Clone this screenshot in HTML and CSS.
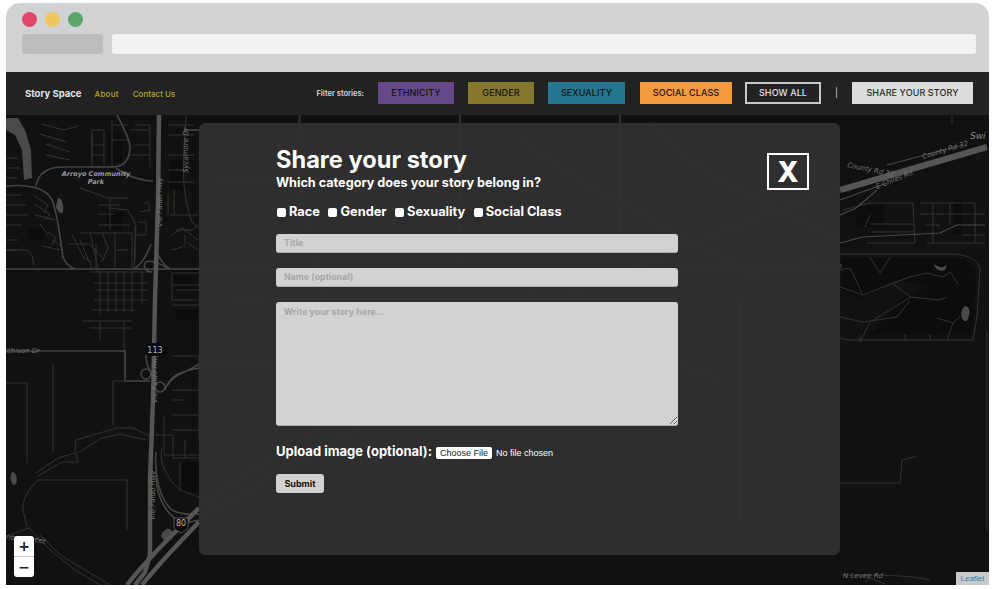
FILE: index.html
```html
<!DOCTYPE html>
<html lang="en">
<head>
<meta charset="utf-8">
<title>Story Space</title>
<link rel="stylesheet" href="styles.css">
</head>
<body>
<div class="window">
  <div class="chrome">
    <div class="lights"><span class="light red"></span><span class="light yellow"></span><span class="light green"></span></div>
    <div class="toolbar"><span class="tabbox"></span><span class="urlbar"></span></div>
  </div>
  <nav class="nav">
    <div class="nav-left">
      <a class="brand">Story Space</a>
      <a class="link link-about">About</a>
      <a class="link">Contact Us</a>
    </div>
    <div class="nav-right">
      <span class="filter-label">Filter stories:</span>
      <a class="btn ethnicity">ETHNICITY</a>
      <a class="btn gender">GENDER</a>
      <a class="btn sexuality">SEXUALITY</a>
      <a class="btn social">SOCIAL CLASS</a>
      <a class="btn showall">SHOW ALL</a>
      <span class="divider">|</span>
      <a class="btn share">SHARE YOUR STORY</a>
    </div>
  </nav>
  <main class="map">
    <svg class="map-art" viewBox="6 115 983 470" aria-hidden="true">
      <g class="dark">
        <rect x="106" y="212" width="16" height="18"/><rect x="170" y="160" width="14" height="30"/>
        <rect x="176" y="310" width="22" height="10"/><rect x="172" y="270" width="26" height="20"/>
        <rect x="28" y="228" width="16" height="12"/><rect x="108" y="133" width="14" height="30"/>
        <rect x="180" y="462" width="19" height="30"/><rect x="856" y="205" width="28" height="22"/>
        <rect x="953" y="200" width="8" height="34"/>
        <path d="M842 258H950C975 258 978 270 975 300L970 335H870L900 300L930 285L900 280L860 298L842 290Z"/>
      </g>
      <g class="water">
        <path d="M6 118H18L25 130L31 150L32 178L24 180L22 150L15 135L6 130Z"/>
        <path d="M58 198C62 198 64 205 63 212C61 215 57 212 56 206Z"/>
        <path d="M12 472C16 472 18 478 16 484L13 485C10 480 10 476 12 472Z"/>
        <path d="M165 530C170 526 174 532 172 535L165 540C160 538 160 534 165 530Z"/>
        <path d="M965 306C970 306 971 313 967 321L964 321C960 317 960 310 965 306Z"/>
        <path d="M934 264C939 268 943 268 947 265L945 270C940 272 935 270 934 264Z"/>
      </g>
      <g class="street">
        <path d="M42 124L64 130L78 126M40 134L66 142M46 144L70 152M46 155L70 160M6 158H18M6 168H20M6 178H18M6 195H22M6 205H26M6 215H28M6 225H22M6 240H18M6 250H16"/>
        <path d="M33 195L48 205L44 213M34 204L50 214L45 220M35 215L55 220M40 224L48 235M48 232L56 238L52 245M42 246L60 250M52 240L62 246"/>
        <path d="M6 250H24C32 250 34 260 33 265M92 130H104V165M92 135V160M92 145H104M92 155H104M92 130V165"/>
        <path d="M112 120V166M112 125H128M112 140H128M135 125H150V167M130 130H150M135 145H150M130 155H150"/>
        <path d="M80 188L108 198H128M110 198V230M108 208L128 210L136 225L134 268M98 205H120M98 214H115M98 225H130M80 233H132V268M90 233L98 268M80 240L92 268M68 244H90L104 260M96 243V268M72 235L84 258L92 262M115 233V268M102 233L108 248L102 262M115 250H128"/>
        <path d="M138 222H146V235H136M140 212L150 210L148 202L144 204M135 226V262"/>
        <path d="M168 125H194M168 135H194M168 155H194M168 170H188M168 182H194M168 194L168 215M170 215H198M174 190V215M176 230H192L198 225M172 235L182 228L198 240M185 235V245M172 250L185 246M188 243L198 250"/>
        <path d="M186 115C186 130 182 150 184 185C185 195 188 212 192 222L199 228"/>
        <path d="M172 273H199M172 285H199M172 273V300H199M172 305H199M176 290H199"/>
        <path d="M90 272H148M94 283H148M96 290H148M94 300H148M92 310H135M100 272V315M108 272V312M116 272V312M124 272V312M132 272V312M142 272V305M82 321H132M90 328H132M124 321V350M100 322V340"/>
        <path d="M113 381V425M113 381H125M172 415H199M172 356H199V440M164 417V455H199M172 400H185M172 390H199"/>
        <path d="M27 383V463M6 383H27M53 363V453"/>
        <path d="M172 430H199M185 440V458M180 462V490"/>
        <path d="M162 447C158 462 168 480 180 490L199 497"/>
        <path d="M38 480H127V530M38 480C28 490 22 500 23 510L27 527"/>
        <path d="M36 473L58 458L75 453L76 440L117 428H133L147 435H173V458H199M38 476L62 462L78 462L76 454L102 438L120 434L146 440"/>
        <path d="M6 536L29 528L50 550L75 570L100 585M40 535L60 555L85 570L110 585"/>
        <path d="M952 115V124M843 210L870 203H913L915 243H867M870 224H914M872 232H914M870 215L865 227"/>
        <path d="M920 203H975V243M920 214H985M925 225H940M933 203V243M950 203V225M962 235H985M927 243H985"/>
        <path d="M840 254H950C970 254 980 262 980 270L977 317L973 340H850L838 338"/>
        <path d="M870 257L880 273L890 257M840 287L863 295L893 283L910 277L927 273L943 277L950 272L958 284M840 270L850 268L862 293M910 297L940 300L947 297M893 284L911 297L870 322L860 342M840 317L863 322L897 317L910 300M937 318L953 323L947 340M953 323L960 317M905 334V340M930 334V340M860 342V335"/>
        <path d="M987 330V530M840 483H900L902 460L917 456"/>
        <path d="M842 575H870C885 575 915 576 930 580M865 582L870 578L885 584"/>
      </g>
      <g class="road">
        <path d="M6 186C30 184 46 188 52 200C58 214 60 240 63 257C66 265 72 268 76 269"/>
        <path d="M36 186C38 172 50 167 62 167H112C124 167 130 160 130 146C128 135 122 125 117 115"/>
        <path d="M116 168C132 180 150 181 153 181"/>
        <path d="M6 269H199M169 269C158 262 150 260 146 262C142 266 146 272 152 272"/>
        <path d="M134 269C144 262 148 252 151 244M170 269C160 262 155 252 156 240"/>
        <path d="M6 351H125V381M125 381H150"/>
        <path d="M148 345C144 358 146 366 156 381M199 364C188 372 172 375 168 385M165 390C170 376 178 372 199 368"/>
        <circle cx="146" cy="374" r="5"/><circle cx="160" cy="387" r="5"/>
        <path d="M156 452C154 475 160 500 172 510C180 514 190 515 199 514"/>
        <path d="M156 475C156 500 170 520 185 523L199 520"/>
        <path d="M184 130H199"/>
      </g>
      <g class="road-soft">
        <path d="M840 200L887 183M887 165L963 145"/>
        <path d="M840 243L863 237L940 233L957 225H985M840 215L856 208L877 190"/>
      </g>
      <g class="highway">
        <path d="M159 115L158 200L155 300L153 400L150 480V555L145 572L135 585"/>
        <path d="M840 190L987 147" class="hw-wide"/>
        <path d="M199 508C178 530 150 555 127 585M199 522C180 542 160 562 142 585"/>
      </g>
      <g class="under">
        <path d="M199 515C290 470 360 430 400 400M199 505C300 440 420 360 560 300C660 255 760 215 840 190"/>
        <path d="M199 269H840M300 115C290 180 310 260 340 330M460 115V260M520 140C600 200 680 230 760 280M560 320L720 380M620 115V240M199 367H360M650 123C690 170 740 190 840 240M215 180H420M230 300L420 320M740 300V520"/>
      </g>
      <g class="labels">
        <text x="96" y="176" class="lbl-park" text-anchor="middle">Arroyo Community</text>
        <text x="96" y="184" class="lbl-park" text-anchor="middle">Park</text>
        <text transform="translate(162 227) rotate(-90)" class="lbl">Vie Faldo Hwy</text>
        <text transform="translate(188 173) rotate(-90)" class="lbl">Sycamore Dr</text>
        <text x="6" y="353" class="lbl">ithison Dr</text>
        <text transform="translate(157 403) rotate(-90)" class="lbl">Vie Faldo Hwy</text>
        <text transform="translate(155 520) rotate(-90)" class="lbl">Vie Faldo Hwy</text>
        <text transform="translate(6 539) rotate(8)" class="lbl">ntr</text>
        <text transform="translate(34 541) rotate(15)" class="lbl">eet</text>
        <text transform="translate(847 167) rotate(12)" class="lbl">County Rd 32</text>
        <text transform="translate(923 159) rotate(-17)" class="lbl">County Rd 32</text>
        <text transform="translate(877 189) rotate(-22)" class="lbl">E Chiles Rd</text>
        <text x="970" y="139" class="lbl-town">Swi</text>
        <text x="798" y="269" class="lbl-town lbl-faint">El Macero</text>
        <text x="843" y="578" class="lbl">N Levee Rd</text>
        <text x="527" y="299" class="lbl lbl-faint">Play Fields Park</text>
      </g>
      <g class="shield">
        <rect x="143" y="343" width="24" height="13" rx="6.500"/>
        <text x="155" y="352.500" text-anchor="middle">113</text>
        <path d="M174 518H188V526C188 530 184 531 181 533C178 531 174 530 174 526Z"/>
        <text x="181" y="526" text-anchor="middle">80</text>
      </g>
    </svg>

    <section class="modal">
      <button class="close" type="button">X</button>
      <h1 class="modal-title">Share your story</h1>
      <h2 class="modal-sub">Which category does your story belong in?</h2>
      <div class="cats">
        <label class="cat"><input type="checkbox">Race</label>
        <label class="cat"><input type="checkbox">Gender</label>
        <label class="cat"><input type="checkbox">Sexuality</label>
        <label class="cat"><input type="checkbox">Social Class</label>
      </div>
      <input class="field" type="text" placeholder="Title">
      <input class="field" type="text" placeholder="Name (optional)">
      <textarea class="field area" placeholder="Write your story here..."></textarea>
      <div class="upload">
        <label class="upload-label">Upload image (optional):</label>
        <input class="file" type="file">
      </div>
      <button class="submit" type="button">Submit</button>
    </section>

    <div class="zoom"><span class="zoom-btn">+</span><span class="zoom-btn minus">−</span></div>
    <a class="attrib">Leaflet</a>
  </main>
</div>
</body>
</html>
```
FILE: styles.css
```css
* { box-sizing: border-box; }
html, body { height: 100%; }
body {
  margin: 0;
  padding: 3px 11px 4px 6px;
  background: #fff;
  font-family: "Inter", "Liberation Sans", sans-serif;
  overflow: hidden;
}
.window { display: flex; flex-direction: column; height: 582px; }

.chrome {
  height: 69px;
  background: #d1d2d4;
  border-radius: 14px 14px 0 0;
  padding: 9px 13px 0 16px;
}
.lights { display: flex; gap: 8px; }
.light { width: 15px; height: 15px; border-radius: 50%; }
.red { background: #e2486c; }
.yellow { background: #eec75f; }
.green { background: #5ba56b; }
.toolbar { display: flex; gap: 9px; margin-top: 7px; }
.tabbox { width: 81px; height: 20px; background: #bcbdbf; border-radius: 3px; }
.urlbar { flex: 1; height: 20px; background: #f2f2f4; border-radius: 3px; }

.nav {
  height: 43px;
  background: #222;
  display: flex;
  align-items: center;
  justify-content: space-between;
  padding: 0 16px 2px 19px;
}
.nav-left { display: flex; align-items: center; gap: 14px; margin-top: 2px; }
.brand { color: #e6e6e6; font-size: 9.500px; font-weight: 700; }
.link { color: #b5a42c; font-size: 8px; font-weight: 500; }
.link-about { margin-left: -1px; letter-spacing: .25px; }
.nav-right { display: flex; align-items: center; gap: 14px; }
.filter-label { color: #d8d8d8; font-size: 7.500px; font-weight: 600; margin-top: 2px; }
.btn {
  height: 22px;
  display: flex;
  align-items: center;
  justify-content: center;
  font-size: 9px;
  font-weight: 500;
  letter-spacing: .1px;
  color: #141414;
}
.ethnicity { width: 76px; background: #66488a; }
.gender { width: 66px; background: #85782c; }
.sexuality { width: 77px; background: #24778e; }
.social { width: 92px; background: #f49a3f; margin-left: 1px; margin-right: -1px; }
.showall { width: 76px; border: 2px solid #c8c8c8; color: #e2e2e2; background: #222; }
.divider { color: #d8d8d8; font-size: 9px; width: 3px; }
.share { width: 121px; background: #dcdcdc; color: #2a2a2a; }

.map { position: relative; flex: 1; background: #111; overflow: hidden; }
.map-art { position: absolute; left: 0; top: 0; width: 983px; height: 470px; }
.map-art path { fill: none; }
.map-art .water path { fill: #4a4a4a; }
.map-art .dark rect, .map-art .dark path { fill: #0c0c0c; }
.street path { stroke: #333; stroke-width: 1; }
.road path, .road circle { stroke: #454545; stroke-width: 1.600; fill: none; }
.road-soft path { stroke: #4a4a4a; stroke-width: 1.200; }
.highway path { stroke: #555; stroke-width: 4.500; }
.highway .hw-wide { stroke-width: 6; }
.under path { stroke: #3c3c3c; stroke-width: 1.500; }
.map-art text { font-family: "DejaVu Sans", sans-serif; }
.lbl { fill: #737373; font-size: 7px; font-style: italic; }
.lbl-park { fill: #9a9a9a; font-size: 6.500px; font-style: italic; font-weight: 700; }
.lbl-town { fill: #8a8a8a; font-size: 9px; font-style: italic; }
.lbl-faint { fill: #505050; }
.shield rect, .map-art .shield path { fill: #0b0b0b; stroke: #666; stroke-width: .8; }
.shield rect { stroke: none; }
.shield text { fill: #b4b4b4; font-size: 8px; }

.modal {
  position: absolute;
  left: 193px;
  top: 8px;
  width: 641px;
  height: 432px;
  padding: 23px 0 0 77px;
  background: rgba(48, 48, 48, .94);
  border-radius: 6px;
  color: #fff;
  display: flex;
  flex-direction: column;
  align-items: flex-start;
}
.close {
  position: absolute;
  left: 568px;
  top: 30px;
  width: 42px;
  height: 37px;
  padding: 0;
  background: transparent;
  border: 2px solid #fff;
  color: #fff;
  font: 800 28px "Inter", sans-serif;
}
.modal-title { margin: 0; font-size: 23.600px; line-height: 28px; font-weight: 700; }
.modal-sub { margin: 1px 0 0; font-size: 12.650px; line-height: 15px; font-weight: 700; }
.cats { display: flex; gap: 8.500px; margin: 13px 0 0 1px; height: 16px; align-items: center; }
.cat { display: flex; align-items: center; gap: 3px; font-size: 12.800px; font-weight: 700; }
.cat input {
  appearance: none;
  width: 9px;
  height: 9px;
  margin: 2px 0 0;
  background: #fff;
  border-radius: 2px;
}
.field {
  display: block;
  width: 402px;
  height: 19px;
  margin-top: 15px;
  padding: 0 8px;
  background: #d2d2d2;
  border: 0;
  border-bottom: 1px solid #aaa;
  border-radius: 3px;
  font: 700 8.700px "Inter", sans-serif;
  letter-spacing: .1px;
}
.field::placeholder { color: #a6a6a6; opacity: 1; }
.area { height: 124px; padding-top: 5px; margin-top: 15px; resize: vertical; }
.upload { display: flex; align-items: center; gap: 4px; margin-top: 16px; height: 18px; }
.upload-label { font-size: 13px; font-weight: 700; }
.file { font: 9px "Liberation Sans", sans-serif; color: #fff; width: 130px; margin-top: 4px; }
.file::file-selector-button {
  width: 56px;
  height: 12px;
  padding: 0;
  margin-right: 4px;
  background: #fff;
  color: #222;
  border: 0;
  border-radius: 2px;
  font: 9px "Liberation Sans", sans-serif;
}
.submit {
  width: 48px;
  height: 19px;
  margin-top: 14px;
  padding: 0;
  background: #d2d2d2;
  border: 0;
  border-radius: 3px;
  color: #111;
  font: 700 9px "Inter", sans-serif;
}

.zoom {
  position: absolute;
  left: 8px;
  top: 421px;
  width: 20px;
  background: #fff;
  border-radius: 3px;
  display: flex;
  flex-direction: column;
}
.zoom-btn {
  height: 20px;
  display: flex;
  align-items: center;
  justify-content: center;
  color: #222;
  font: 700 14px "DejaVu Sans", sans-serif;
}
.minus { height: 21px; border-top: 1px solid #ccc; }
.attrib {
  position: absolute;
  right: 0;
  bottom: 0;
  width: 33px;
  height: 13px;
  display: flex;
  align-items: center;
  justify-content: center;
  background: #c9c9c9;
  color: #2f86b5;
  font: 8px "Liberation Sans", sans-serif;
}
```
